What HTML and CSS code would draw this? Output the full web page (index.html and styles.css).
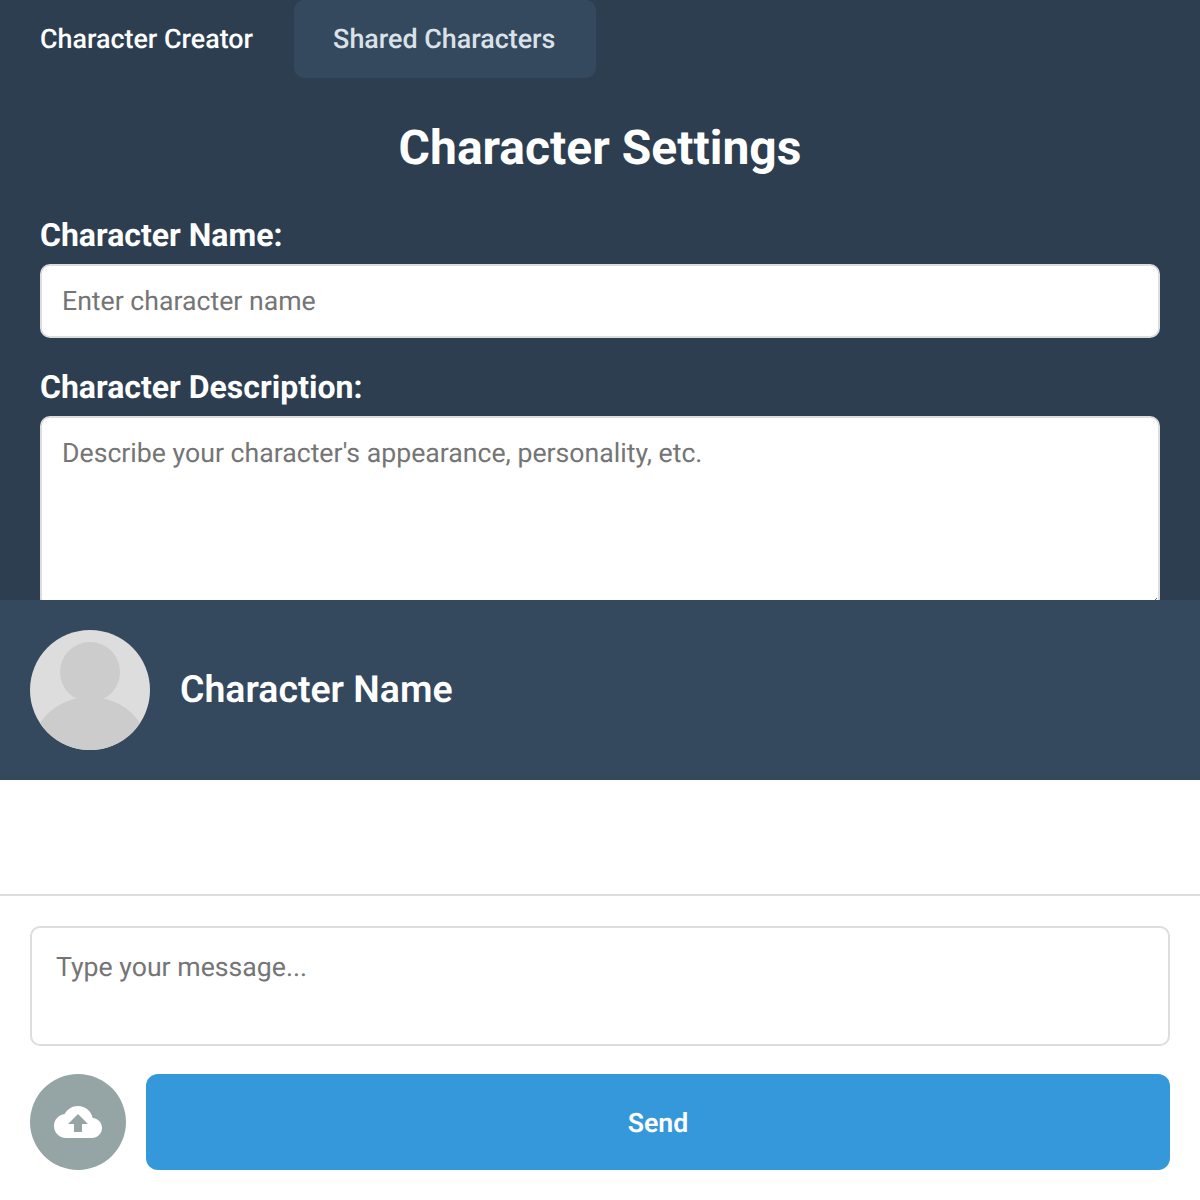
FILE: index.html
```html
<!DOCTYPE html>
<html lang="en">
<head>
  <meta charset="UTF-8" />
  <meta name="viewport" content="width=device-width, initial-scale=1.0"/>
  <title>Character Creator</title>
  <link rel="stylesheet" href="styles.css">
</head>
<body>

<!-- Creator Section -->
<section class="creator">
  <nav class="tabs">
    <button class="tab active">Character Creator</button>
    <button class="tab">Shared Characters</button>
  </nav>

  <div class="settings">
    <h2>Character Settings</h2>

    <label for="charName">Character Name:</label>
    <input id="charName" class="field" type="text" placeholder="Enter character name">

    <label for="charDesc">Character Description:</label>
    <textarea id="charDesc" class="field desc" placeholder="Describe your character's appearance, personality, etc."></textarea>
  </div>
</section>

<!-- Chat Section -->
<section class="chat">
  <header class="chat-header">
    <svg class="avatar" viewBox="0 0 120 120">
      <defs>
        <clipPath id="avatarClip"><circle cx="60" cy="60" r="60"/></clipPath>
      </defs>
      <circle cx="60" cy="60" r="60" fill="#dddddd"/>
      <g clip-path="url(#avatarClip)" fill="#cccccc">
        <circle cx="60" cy="42" r="30"/>
        <ellipse cx="60" cy="120" rx="58" ry="53"/>
      </g>
    </svg>
    <h3>Character Name</h3>
  </header>

  <div class="messages"></div>

  <div class="composer">
    <textarea class="message-input" placeholder="Type your message..."></textarea>
    <div class="actions">
      <button class="upload" aria-label="Upload">
        <svg viewBox="0 0 24 24" width="48" height="48">
          <path fill="#ffffff" d="M19.35 10.04C18.67 6.59 15.64 4 12 4 9.11 4 6.6 5.64 5.35 8.04 2.34 8.36 0 10.91 0 14c0 3.31 2.69 6 6 6h13c2.76 0 5-2.24 5-5 0-2.64-2.05-4.78-4.65-4.96zM14 13v4h-4v-4H7l5-5 5 5h-3z"/>
        </svg>
      </button>
      <button class="send">Send</button>
    </div>
  </div>
</section>

</body>
</html>
```

FILE: styles.css
```css
* {
  box-sizing: border-box;
}

body {
  font-family: Roboto, sans-serif;
  margin: 0;
  background: white;
  color: #212529;
  text-rendering: geometricPrecision;
}

button {
  font-family: inherit;
  border: none;
  cursor: pointer;
  text-rendering: inherit;
}

.creator {
  height: 600px;
  overflow: hidden;
  background-color: #2c3e50;
  color: white;
}

.tabs {
  display: flex;
  gap: 1px;
}

.tab {
  height: 78px;
  padding: 0 40px;
  background: transparent;
  color: white;
  font-size: 26.88px;
  font-weight: 500;
  border-radius: 10px;
}

.tab:not(.active) {
  background-color: #34495e;
  color: #dbe1e8;
  padding: 0 41px 0 39px;
}

.settings {
  padding: 0 40px;
}

.settings h2 {
  margin: 41px 0 0;
  text-align: center;
  font-size: 48px;
  line-height: 58px;
  font-weight: 700;
}

.settings label {
  display: block;
  font-size: 32px;
  line-height: 38px;
  font-weight: 700;
}

.settings h2 + label {
  margin-top: 39px;
  margin-bottom: 10px;
}

.field {
  display: block;
  width: 100%;
  padding: 20px;
  font-family: inherit;
  font-size: 26.67px;
  color: #212529;
  background: white;
  border: 2px solid #dddddd;
  border-radius: 10px;
  text-rendering: inherit;
}

input.field {
  height: 74px;
  margin-bottom: 30px;
}

.settings .field + label {
  margin-bottom: 10px;
}

.desc {
  height: 192px;
  padding-top: 19px;
}

.chat-header {
  display: flex;
  align-items: center;
  gap: 30px;
  height: 180px;
  padding: 0 30px;
  background-color: #34495e;
  color: white;
}

.avatar {
  width: 120px;
  height: 120px;
  flex-shrink: 0;
}

.chat-header h3 {
  margin: 0 0 1px;
  font-size: 37.44px;
  font-weight: 600;
}

.messages {
  height: 116px;
  border-bottom: 2px solid #dddddd;
}

.composer {
  padding: 30px;
}

.message-input {
  display: block;
  width: 100%;
  height: 120px;
  padding: 23px 24px;
  font-family: inherit;
  font-size: 26.67px;
  background: white;
  border: 2px solid #dddddd;
  border-radius: 10px;
  resize: none;
  text-rendering: inherit;
}

.actions {
  display: flex;
  gap: 20px;
  margin-top: 28px;
}

.upload {
  display: flex;
  align-items: center;
  justify-content: center;
  width: 96px;
  height: 96px;
  flex-shrink: 0;
  padding: 0;
  background-color: #95a5a6;
  border-radius: 50%;
}

.send {
  flex: 1;
  height: 96px;
  padding-top: 3px;
  background-color: #3498db;
  color: white;
  font-size: 26.67px;
  font-weight: 600;
  border-radius: 12px;
}
```
